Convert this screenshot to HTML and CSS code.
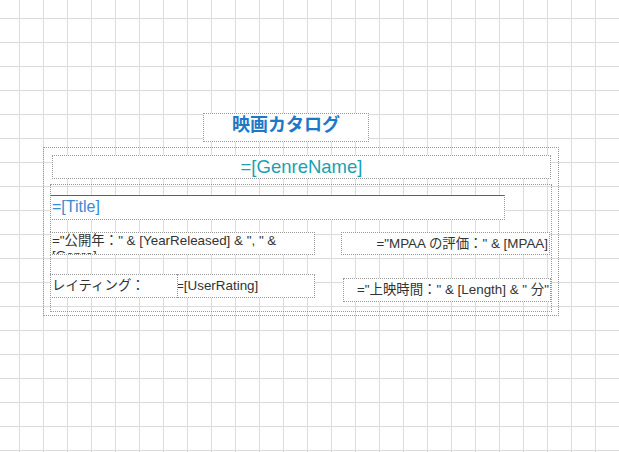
FILE: index.html
```html
<!DOCTYPE html>
<html lang="ja">
<head>
<meta charset="utf-8">
<title>映画カタログ</title>
<link rel="stylesheet" href="styles.css">
</head>
<body>
<div class="surface">
  <div class="report-title">映画カタログ</div>
  <div class="list">
    <div class="genre">=[GenreName]</div>
    <div class="detail">
      <div class="movie-title">=[Title]</div>
      <div class="row row-1">
        <div class="field field-year">="公開年：" &amp; [YearReleased] &amp; ", " &amp; [Genre]</div>
        <div class="field field-mpaa">="MPAA の評価：" &amp; [MPAA]</div>
      </div>
      <div class="row row-2">
        <div class="field field-label">レイティング：</div>
        <div class="field field-rating">=[UserRating]</div>
        <div class="field field-length">="上映時間：" &amp; [Length] &amp; " 分"</div>
      </div>
    </div>
  </div>
</div>
</body>
</html>
```

FILE: styles.css
```css
* { box-sizing: border-box; }
html, body { margin: 0; height: 100%; }
body {
  background-color: #fff;
  background-image:
    linear-gradient(to right, #dcdcdc 1px, transparent 1px),
    linear-gradient(to bottom, #dcdcdc 1px, transparent 1px);
  background-size: 24px 24px;
  background-position: 19px 18px;
  font-family: "Liberation Sans", "Noto Sans CJK JP", sans-serif;
  overflow: hidden;
}
.surface { padding-top: 113px; }
.report-title {
  margin-left: 203px;
  width: 166px;
  height: 29px;
  border: 1px dotted #9a9a9a;
  background: #fff;
  text-align: center;
  font-family: "Noto Sans CJK JP", sans-serif;
  font-weight: 700;
  font-size: 18px;
  line-height: 19px;
  color: #1e78c8;
}
.list {
  margin: 5px 0 0 43px;
  width: 516px;
  height: 169px;
  border: 1px dotted #9a9a9a;
  padding: 7px 0 0 8px;
}
.genre {
  width: 499px;
  height: 24px;
  border: 1px dotted #9a9a9a;
  background: #fff;
  text-align: center;
  font-size: 18.5px;
  line-height: 22px;
  color: #1a9fb5;
}
.detail {
  margin: 5px 0 0 -2px;
  width: 502px;
  height: 128px;
  border: 1px dotted #9a9a9a;
}
.movie-title {
  margin: 10px 0 0 -1px;
  width: 455px;
  height: 25px;
  border: 1px dotted #9a9a9a;
  border-top: 1px solid #2a6aa6;
  background: #fff;
  padding-left: 1px;
  font-size: 16px;
  line-height: 22px;
  color: #3a8bd0;
}
.row { display: flex; align-items: flex-start; margin-left: -1px; }
.row-1 { margin-top: 12px; }
.row-2 { margin-top: 19px; }
.field {
  border: 1px dotted #9a9a9a;
  background: #fff;
  font-size: 13.4px;
  color: #333;
  overflow: hidden;
  white-space: nowrap;
}
.field-year {
  width: 265px;
  height: 23px;
  padding-left: 1px;
  line-height: 15px;
  white-space: normal;
}
.field-mpaa {
  margin-left: 26px;
  width: 209px;
  height: 23px;
  padding-right: 1px;
  text-align: right;
  line-height: 21px;
}
.field-label {
  width: 127px;
  height: 24px;
  border-right: none;
  padding-left: 1px;
  line-height: 21px;
}
.field-rating {
  width: 138px;
  height: 24px;
  line-height: 21px;
  text-indent: -2px;
}
.field-length {
  margin: 4px 0 0 28px;
  width: 208px;
  height: 24px;
  padding-right: 1px;
  text-align: right;
  line-height: 22px;
}
```
